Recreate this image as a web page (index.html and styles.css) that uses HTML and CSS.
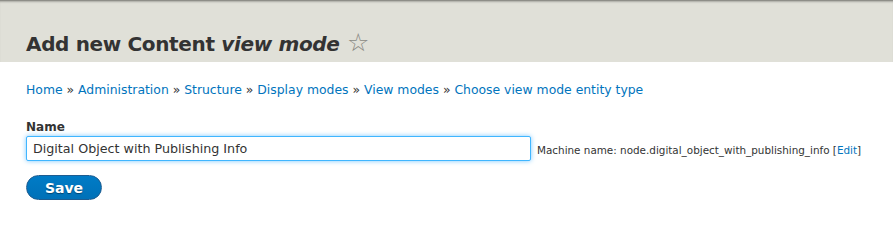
FILE: index.html
```html
<!DOCTYPE html>
<html lang="en">
<head>
    <meta charset="UTF-8">
    <meta name="viewport" content="width=device-width, initial-scale=1.0">
    <title>Add new Content view mode</title>
    <link rel="stylesheet" href="styles.css">
</head>
<body>
    <header class="page-header">
        <h1 class="page-title">Add new Content <em>view mode</em> <span class="star">&#9734;</span></h1>
    </header>
    <div class="content">
        <nav class="breadcrumb">
            <a href="#">Home</a> &raquo; <a href="#">Administration</a> &raquo; <a href="#">Structure</a> &raquo; <a href="#">Display modes</a> &raquo; <a href="#">View modes</a> &raquo; <a href="#">Choose view mode entity type</a>
        </nav>
        <form class="form">
            <label class="label" for="name">Name</label>
            <div class="field-row">
                <input class="text-input" id="name" type="text" value="Digital Object with Publishing Info">
                <span class="machine-name">Machine name: node.digital_object_with_publishing_info [<a href="#">Edit</a>]</span>
            </div>
            <button class="btn-save" type="button">Save</button>
        </form>
    </div>
</body>
</html>
```

FILE: styles.css
```css
* {
  margin: 0;
  padding: 0;
  box-sizing: border-box;
}
body {
  font-family: "DejaVu Sans", "Liberation Sans", sans-serif;
  color: #333;
  background: #fff;
}
a {
  color: #0074bd;
  text-decoration: none;
}

.page-header {
  height: 62px;
  background: #e0e0d8;
  border-top: 1px solid #8e8e88;
  box-shadow: inset 0 2px 2px -1px #a8a8a2;
  padding: 0 26px;
  display: flex;
  align-items: flex-end;
}
.page-title {
  font-size: 20px;
  font-weight: bold;
  color: #333;
  line-height: 1;
  padding-bottom: 8px;
  letter-spacing: -0.35px;
  white-space: nowrap;
}
.page-title em {
  font-style: italic;
}
.page-title .star {
  font-weight: normal;
  color: #8a8a84;
  font-size: 25px;
  line-height: 0;
  margin-left: 1px;
}

.content {
  padding: 0 26px;
}
.breadcrumb {
  font-size: 12.4px;
  padding-top: 20px;
  line-height: 16px;
  color: #333;
  white-space: nowrap;
}

.form {
  padding-top: 22px;
}
.label {
  display: block;
  font-weight: bold;
  font-size: 12px;
  line-height: 15px;
}
.field-row {
  display: flex;
  align-items: center;
  gap: 6px;
  margin-top: 1px;
}
.text-input {
  flex-shrink: 0;
  width: 505px;
  height: 25px;
  border: 1px solid #40b6ff;
  border-radius: 2px;
  box-shadow: 0 0 5px #7cc8ff;
  padding: 0 6px;
  font-family: inherit;
  font-size: 12.7px;
  color: #333;
  outline: none;
}
.machine-name {
  font-size: 10.4px;
  color: #333;
  padding-top: 3px;
  white-space: nowrap;
}

.btn-save {
  margin-top: 14px;
  width: 76px;
  height: 25px;
  border: 1px solid #1e5c90;
  border-radius: 20px;
  background: linear-gradient(#007bc6, #0071b8);
  color: #fff;
  font-family: inherit;
  font-size: 14px;
  font-weight: bold;
  text-shadow: 0 1px 1px rgba(0, 0, 0, 0.4);
}
```
